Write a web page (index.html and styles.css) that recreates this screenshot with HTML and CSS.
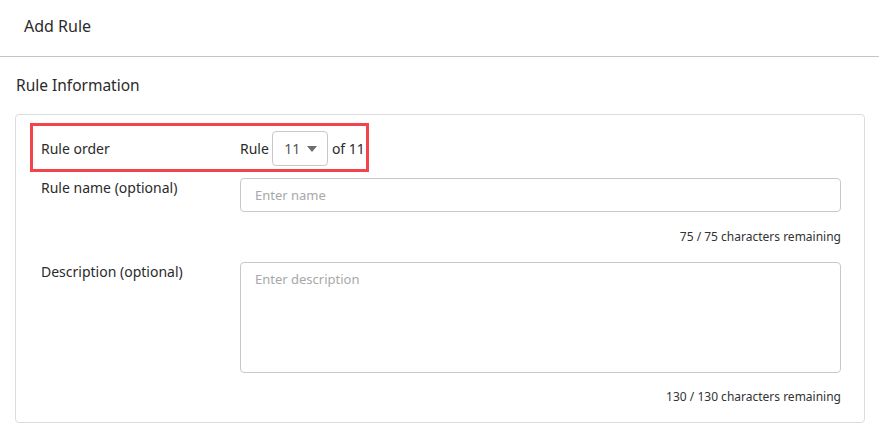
FILE: index.html
```html
<!DOCTYPE html>
<html>
<head>
<meta charset="utf-8">
<link rel="stylesheet" href="styles.css">
</head>
<body>
<header class="top">Add Rule</header>
<section class="section">
  <h2 class="section-title">Rule Information</h2>
  <div class="card">
    <div class="row row-order">
      <div class="label">Rule order</div>
      <div class="order-ctl">
        <span>Rule</span>
        <div class="select">11
          <svg class="caret" width="10" height="6" viewBox="0 0 10 6"><path d="M0 0h10L5 6z" fill="#6a6e73"/></svg>
        </div>
        <span>of 11</span>
      </div>
    </div>
    <div class="row">
      <div class="label">Rule name (optional)</div>
      <div class="field">
        <div class="input">Enter name</div>
        <div class="counter">75 / 75 characters remaining</div>
      </div>
    </div>
    <div class="row row-desc">
      <div class="label">Description (optional)</div>
      <div class="field">
        <div class="input textarea">Enter description</div>
        <div class="counter">130 / 130 characters remaining</div>
      </div>
    </div>
  </div>
</section>
</body>
</html>
```

FILE: styles.css
```css
* { box-sizing: border-box; }
body {
  margin: 0;
  font-family: "Noto Sans", sans-serif;
  color: #2b2b2b;
  background: #fff;
}
.top {
  height: 57px;
  padding: 0 0 5px 24px;
  display: flex;
  align-items: center;
  font-size: 16px;
  border-bottom: 1px solid #c4c4c4;
}
.section {
  padding: 16px 14px 0 15px;
}
.section-title {
  margin: 0;
  font-weight: 400;
  font-size: 15.5px;
  line-height: 24px;
  padding-left: 1px;
}
.card {
  margin-top: 17px;
  border: 1px solid #dcdcdc;
  border-radius: 4px;
  padding: 8px 23px 16px 14px;
  font-size: 14px;
}
.row {
  display: flex;
  padding-left: 11px;
}
.row-order {
  width: 339px;
  height: 49px;
  border: 3px solid #f2444a;
  padding-left: 8px;
  align-items: center;
}
.label {
  width: 199px;
  flex: none;
  line-height: 20px;
}
.row-order .label { padding-top: 2px; }
.order-ctl {
  display: flex;
  align-items: center;
  gap: 3px;
  padding-top: 2px;
}
.order-ctl span:last-child { margin-left: 1px; }
.select {
  width: 56px;
  height: 35px;
  border: 1px solid #c8c8c8;
  border-radius: 4px;
  display: flex;
  align-items: center;
  justify-content: center;
  gap: 7px;
  color: #555;
  padding-left: 2px;
}
.caret { display: block; }
.row + .row { margin-top: 6px; }
.row-desc { margin-top: 16px !important; }
.field { flex: 1; }
.input {
  height: 34px;
  border: 1px solid #c8c8c8;
  border-radius: 4px;
  padding: 0 14px;
  display: flex;
  align-items: center;
  color: #a8a8a8;
  font-size: 13px;
}
.textarea {
  height: 111px;
  align-items: flex-start;
  padding-top: 7px;
}
.counter {
  text-align: right;
  font-size: 12px;
  line-height: 18px;
  color: #333;
  margin-top: 16px;
}
.row-desc .counter { margin-top: 15px; }
```
